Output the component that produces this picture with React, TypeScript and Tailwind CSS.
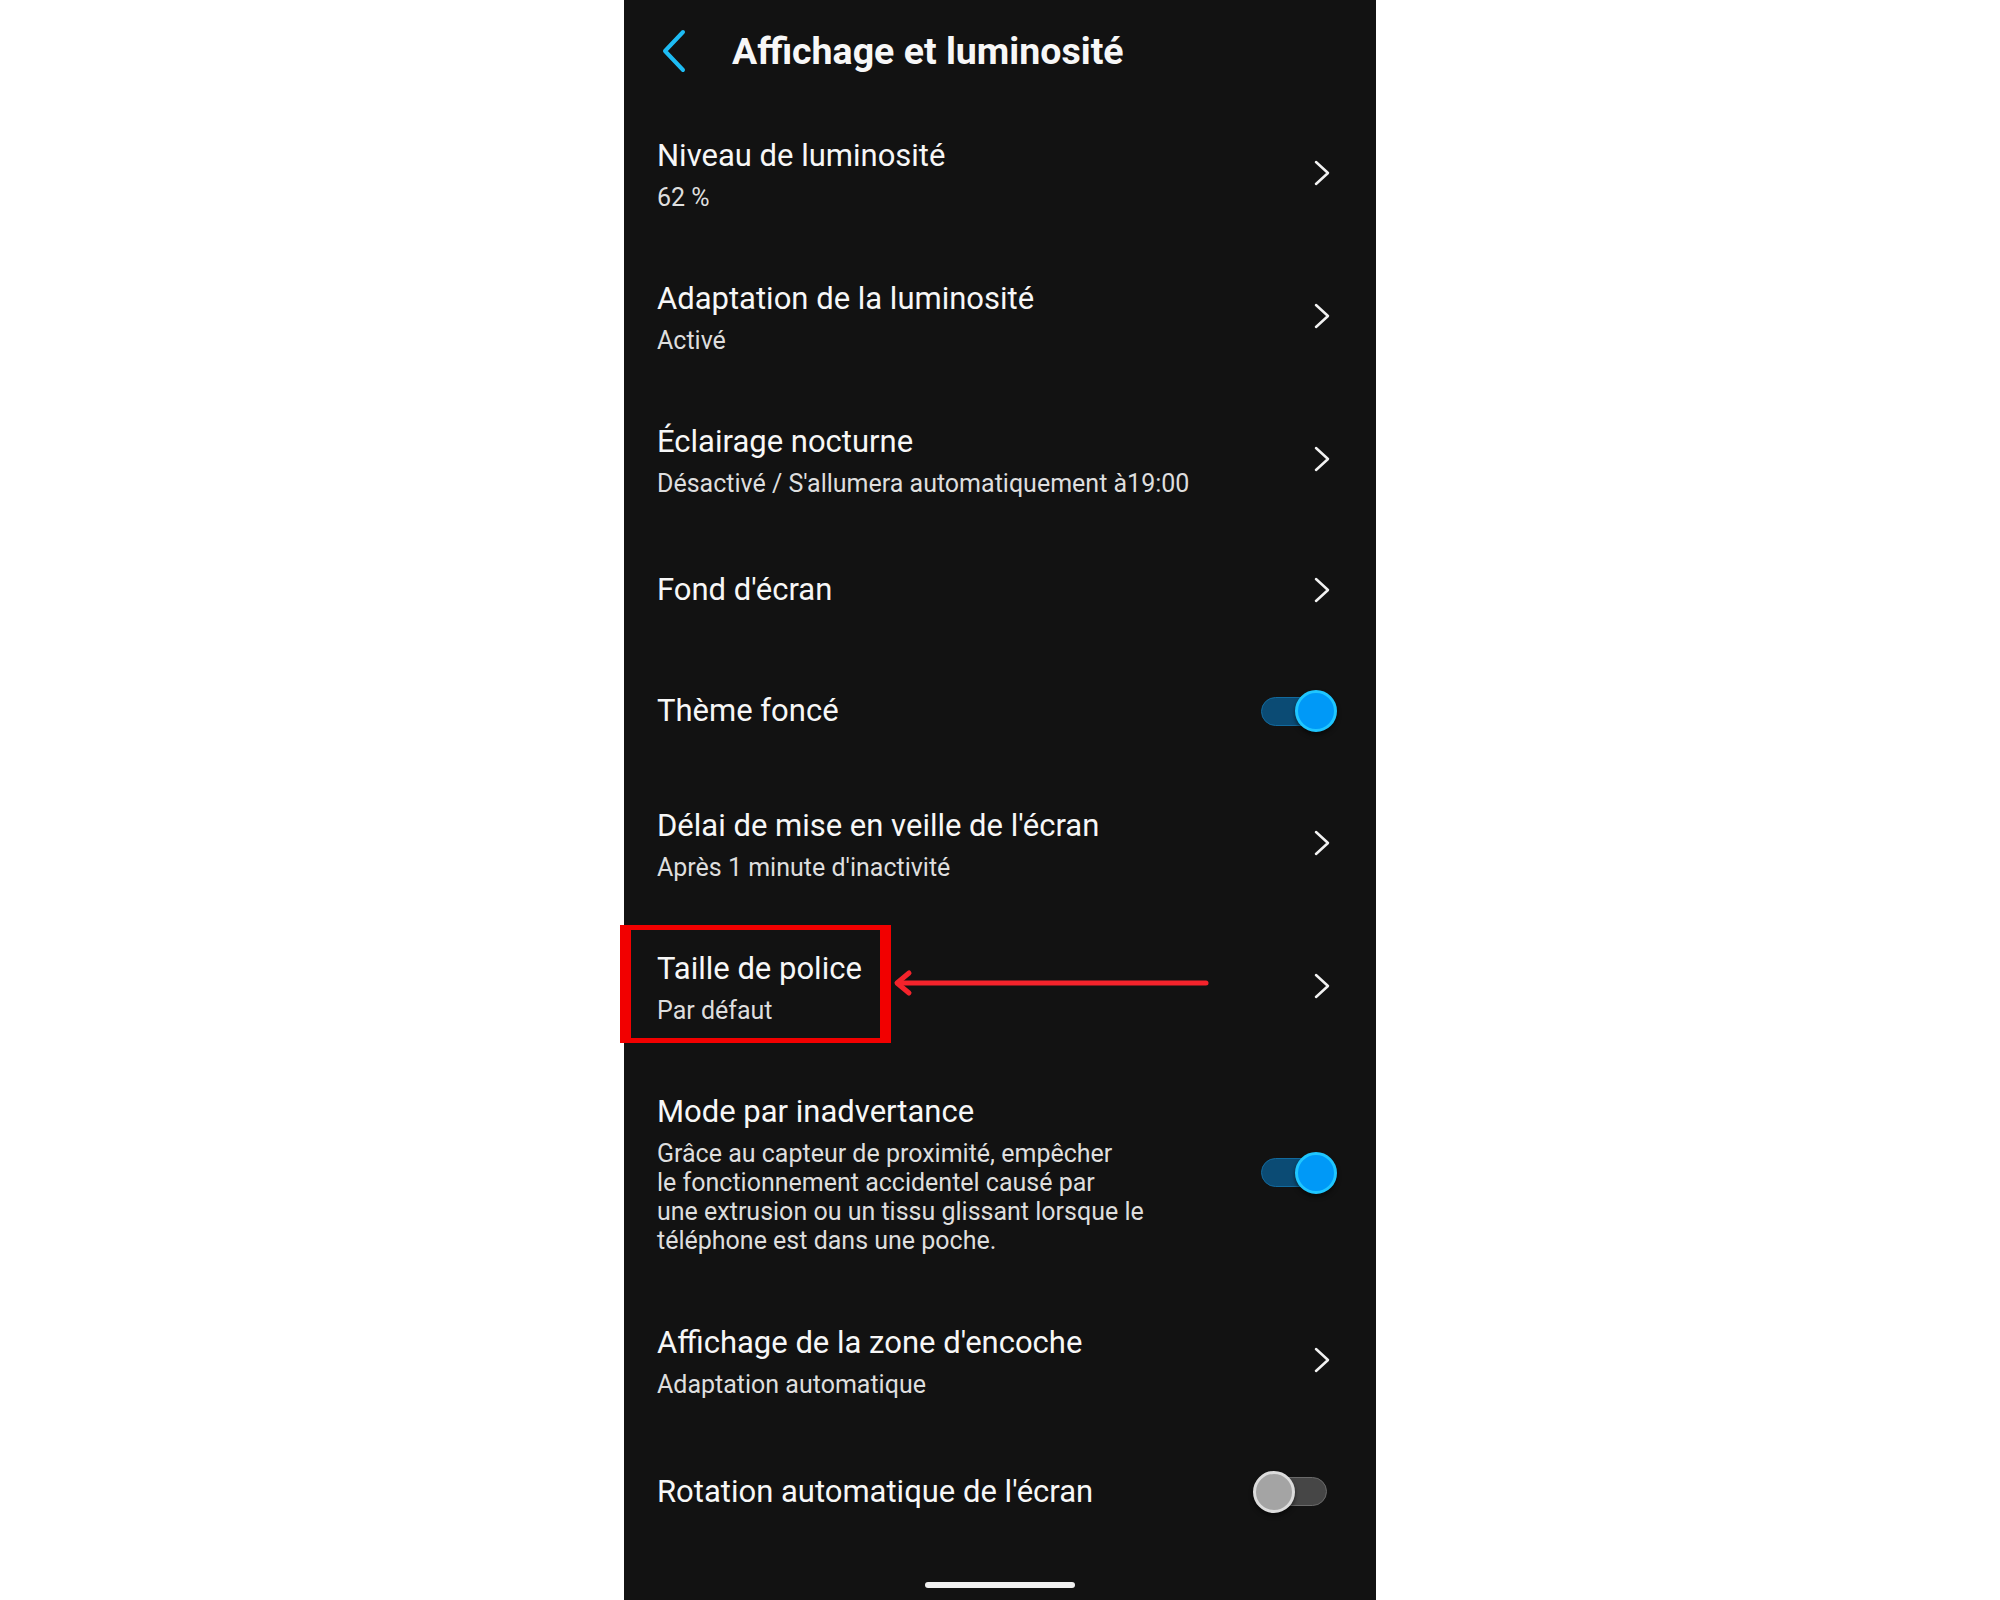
import type { ReactNode } from 'react'

const font = { fontFamily: 'Roboto, "Noto Sans", sans-serif' }

function Chevron() {
    return (
        <svg width="18" height="26" viewBox="0 0 18 26" className="mr-[45px]">
            <polyline points="3,2 15,13 3,24" fill="none" stroke="#f2f2f2" strokeWidth="2.5" strokeLinecap="round" strokeLinejoin="round" />
        </svg>
    )
}

function Toggle({ on }: { on: boolean }) {
    if (on) {
        return (
            <div className="relative w-[76px] h-[42px] mr-[39px] flex items-center">
                <div className="w-[66px] h-[29px] rounded-full bg-[#0b4b74] border border-[#126a9e]"></div>
                <div className="absolute right-0 top-0 w-[42px] h-[42px] rounded-full bg-[#0099f7] border-[3px] border-[#1fc6ff] shadow-[0_3px_4px_rgba(0,0,0,0.5)]"></div>
            </div>
        )
    }
    return (
        <div className="relative w-[74px] h-[42px] mr-[49px] flex items-center justify-end">
            <div className="w-[40px] h-[29px] rounded-r-full bg-[#464646] border border-[#6a6a6a]"></div>
            <div className="absolute left-0 top-0 w-[42px] h-[42px] rounded-full bg-[#a4a4a4] border-[3px] border-[#dcdcdc] shadow-[0_3px_4px_rgba(0,0,0,0.5)]"></div>
        </div>
    )
}

type RowProps = {
    title: string
    sub?: ReactNode
    right?: ReactNode
    height: string
    children?: ReactNode
}

function Row({ title, sub, right, height, children }: RowProps) {
    return (
        <div className={`relative flex items-center justify-between pl-[33px] ${height}`}>
            <div className={sub ? 'pt-[3px]' : ''}>
                <div className="text-[31px] leading-[38px] text-[#f7f7f7]">{title}</div>
                {sub && <div className="mt-2 text-[25px] leading-[29px] text-[#dedede]">{sub}</div>}
            </div>
            {right ?? <Chevron />}
            {children}
        </div>
    )
}

export default function App() {
    return (
        <div className="min-h-screen bg-white flex justify-center" style={font}>
            <div className="w-[752px] h-[1600px] bg-[#121212] flex flex-col">
                <div className="h-[101px] flex items-center pl-[36px]">
                    <svg width="28" height="44" viewBox="0 0 28 44">
                        <polyline points="23,3 5,22 23,41" fill="none" stroke="#1ebcf4" strokeWidth="4" strokeLinecap="round" strokeLinejoin="round" />
                    </svg>
                    <div className="ml-[44px] mt-[2px] text-[37.5px] font-bold text-[#f7f7f7] leading-none">Affichage et luminosité</div>
                </div>

                <Row title="Niveau de luminosité" sub="62 %" height="h-[143px]" />
                <Row title="Adaptation de la luminosité" sub="Activé" height="h-[143px]" />
                <Row title="Éclairage nocturne" sub="Désactivé / S'allumera automatiquement à19:00" height="h-[143px]" />
                <Row title="Fond d'écran" height="h-[120px]" />
                <Row title="Thème foncé" height="h-[122px]" right={<Toggle on />} />
                <Row title="Délai de mise en veille de l'écran" sub="Après 1 minute d'inactivité" height="h-[142px]" />
                <Row title="Taille de police" sub="Par défaut" height="h-[143px]">
                    <div className="absolute left-[-4px] top-[11px] w-[271px] h-[118px] border-x-[11px] border-y-[5px] border-[#f20000]"></div>
                    <svg className="absolute left-[268px] top-[55px]" width="318" height="28" viewBox="0 0 318 28">
                        <line x1="6" y1="14" x2="314" y2="14" stroke="#f4232b" strokeWidth="5" strokeLinecap="round" />
                        <polyline points="17,4 5,14 17,24" fill="none" stroke="#f4232b" strokeWidth="5" strokeLinecap="round" strokeLinejoin="round" />
                    </svg>
                </Row>
                <Row
                    title="Mode par inadvertance"
                    sub={
                        <>
                            <span className="block">Grâce au capteur de proximité, empêcher</span>
                            <span className="block">le fonctionnement accidentel causé par</span>
                            <span className="block">une extrusion ou un tissu glissant lorsque le</span>
                            <span className="block">téléphone est dans une poche.</span>
                        </>
                    }
                    height="h-[231px]"
                    right={<Toggle on />}
                />
                <Row title="Affichage de la zone d'encoche" sub="Adaptation automatique" height="h-[143px]" />
                <Row title="Rotation automatique de l'écran" height="h-[121px]" right={<Toggle on={false} />} />

                <div className="flex-1 flex items-end justify-center pb-[12px]">
                    <div className="w-[150px] h-[6px] rounded-full bg-[#f0f0f0]"></div>
                </div>
            </div>
        </div>
    )
}
